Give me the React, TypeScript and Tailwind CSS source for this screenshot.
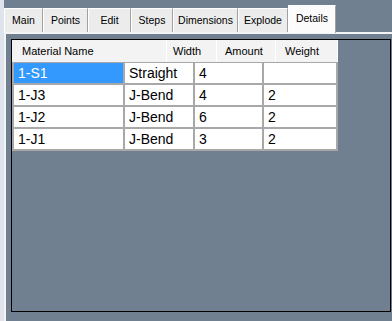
import React from "react";

const tabs = [
  { label: "Main", w: 39 },
  { label: "Points", w: 45 },
  { label: "Edit", w: 43 },
  { label: "Steps", w: 42 },
  { label: "Dimensions", w: 65 },
  { label: "Explode", w: 50 },
];

const headers = [
  { label: "Material Name", w: 155, pl: 10 },
  { label: "Width", w: 50, pl: 6 },
  { label: "Amount", w: 59, pl: 8 },
  { label: "Weight", w: 62, pl: 9 },
];

const colW = [113, 70, 69, 74];

const rows = [
  ["1-S1", "Straight", "4", ""],
  ["1-J3", "J-Bend", "4", "2"],
  ["1-J2", "J-Bend", "6", "2"],
  ["1-J1", "J-Bend", "3", "2"],
];

export default function App() {
  return (
    <div
      className="w-[392px] h-[321px] flex bg-[#708090] overflow-hidden"
      style={{ fontFamily: '"Liberation Sans", Arial, sans-serif' }}
    >
      <div className="w-[4px] h-full bg-[#dfe4ec]" />
      <div className="flex-1 flex flex-col">
        <div className="h-[32px] flex items-end text-[10.5px] text-black">
          {tabs.map((t) => (
            <div
              key={t.label}
              className="h-[24px] flex items-center justify-center bg-[#ececec] border-t border-l border-white border-r border-r-[#a0a0a0]"
              style={{ width: t.w }}
            >
              {t.label}
            </div>
          ))}
          <div className="w-[48px] h-[28px] mb-[-1px] pb-[2px] flex items-center justify-center bg-[#fbfbfb] border-t border-l border-white border-r border-r-[#a0a0a0] relative z-10">
            Details
          </div>
        </div>
        <div className="flex-1 border-t-2 border-l-2 border-[#f4f4f4] pl-[5px] pt-[5px] pb-[9px] pr-[1px] flex">
          <div className="flex-1 border border-black bg-[#708090]">
            <div className="w-[326px]">
              <div className="flex h-[22px] bg-[#f3f3f3] text-[11px] text-black">
                {headers.map((h) => (
                  <div
                    key={h.label}
                    className="flex items-center border-r border-white"
                    style={{ width: h.w, paddingLeft: h.pl }}
                  >
                    {h.label}
                  </div>
                ))}
              </div>
              <div className="border-l-2 border-t border-[#a8a8a8] text-[14px] text-black">
                {rows.map((r, i) => (
                  <div key={i} className="flex h-[22px]">
                    {r.map((c, j) => (
                      <div
                        key={j}
                        className={
                          "flex items-center pl-[4px] border-r-2 border-b-2 border-[#a8a8a8] " +
                          (i === 0 && j === 0 ? "bg-[#3399ff] text-white" : "bg-white")
                        }
                        style={{ width: j === 0 ? colW[j] - 2 : colW[j] }}
                      >
                        {c}
                      </div>
                    ))}
                  </div>
                ))}
              </div>
            </div>
          </div>
        </div>
      </div>
    </div>
  );
}
